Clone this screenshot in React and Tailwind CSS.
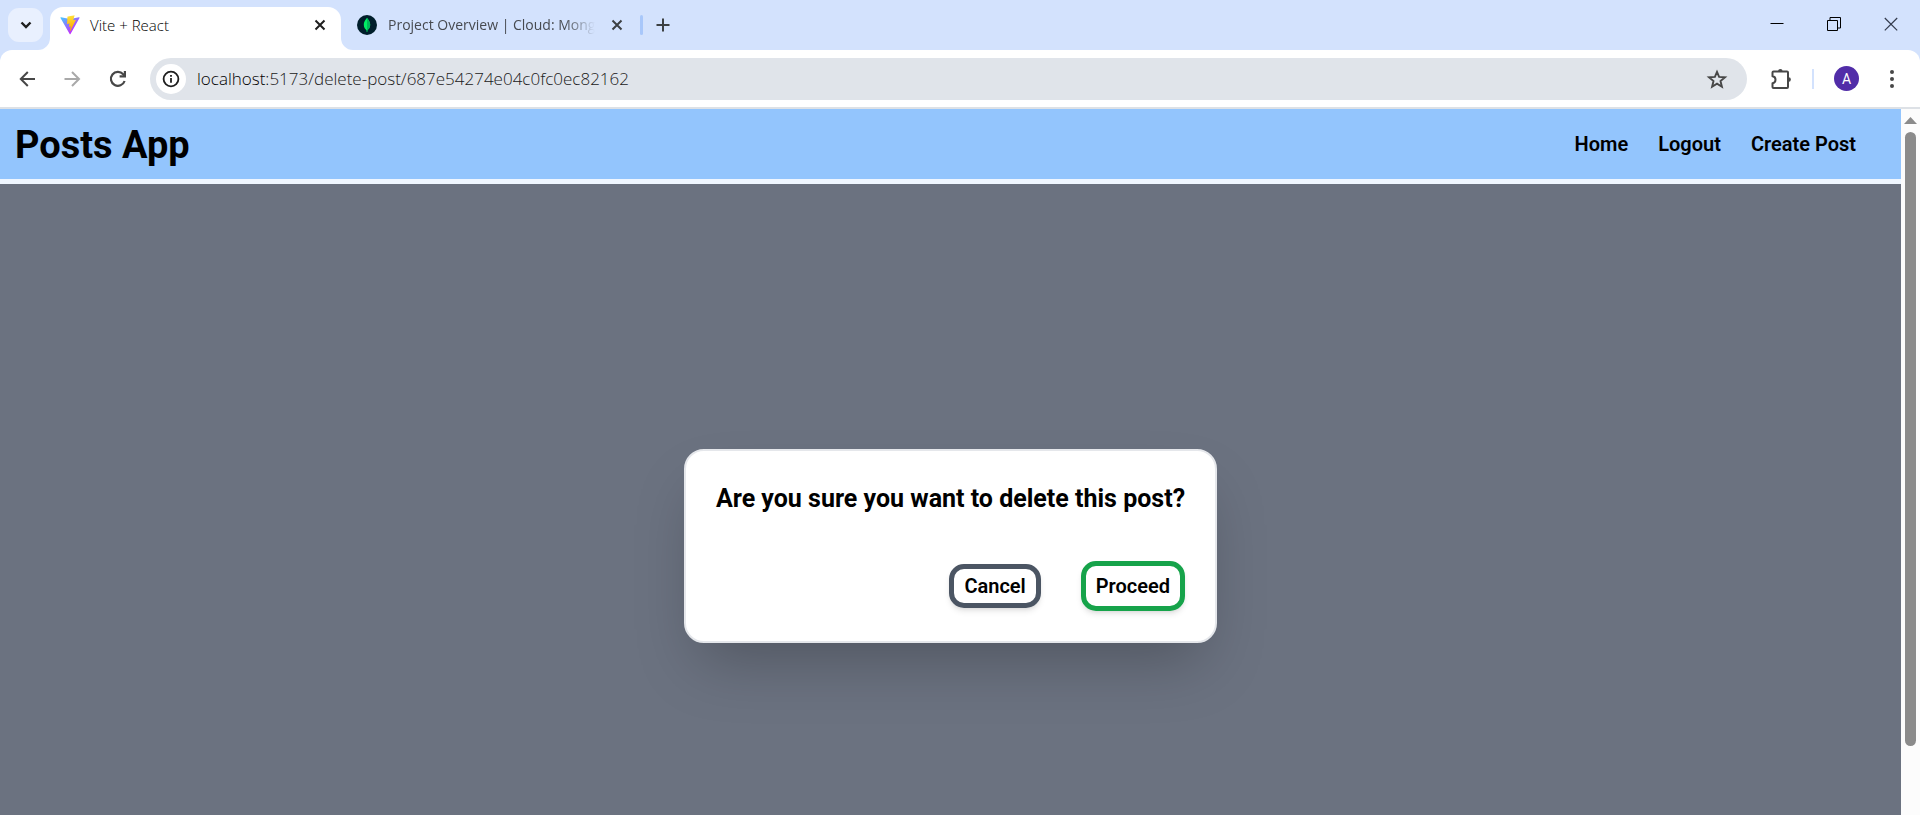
import React from "react";

function ViteLogo() {
  return (
    <svg className="size-5 shrink-0" viewBox="0 0 410 404" fill="none" aria-hidden="true">
      <defs>
        <linearGradient id="viteBody" x1="6" y1="33" x2="235" y2="344" gradientUnits="userSpaceOnUse">
          <stop stopColor="#41D1FF" />
          <stop offset="1" stopColor="#BD34FE" />
        </linearGradient>
        <linearGradient id="viteBolt" x1="194.65" y1="8.82" x2="236.08" y2="292.99" gradientUnits="userSpaceOnUse">
          <stop stopColor="#FFEA83" />
          <stop offset="0.083" stopColor="#FFDD35" />
          <stop offset="1" stopColor="#FFA800" />
        </linearGradient>
      </defs>
      <path fill="url(#viteBody)" d="M399.641 59.5246L215.643 388.545C211.844 395.338 202.084 395.378 198.228 388.618L10.5817 59.5563C6.38087 52.1896 12.6802 43.2665 21.0281 44.7586L205.223 77.6824C206.398 77.8924 207.601 77.8904 208.776 77.6763L389.119 44.8058C397.439 43.2894 403.768 52.1434 399.641 59.5246Z" />
      <path fill="url(#viteBolt)" d="M292.965 1.5744L156.801 28.2552C154.563 28.6937 152.906 30.5903 152.771 32.8664L144.395 174.33C144.198 177.662 147.258 180.248 150.51 179.498L188.42 170.749C191.967 169.931 195.172 173.055 194.443 176.622L183.18 231.775C182.422 235.487 185.907 238.661 189.532 237.56L212.947 230.446C216.577 229.344 220.065 232.527 219.297 236.242L201.398 322.875C200.278 328.294 207.486 331.249 210.492 326.603L212.5 323.5L323.454 102.072C325.312 98.3645 322.108 94.137 318.036 94.9228L279.014 102.454C275.347 103.161 272.227 99.746 273.262 96.1583L298.731 7.86689C299.767 4.27314 296.636 0.855181 292.965 1.5744Z" />
    </svg>
  );
}

function MongoLogo() {
  return (
    <svg className="size-5 shrink-0" viewBox="0 0 20 20" aria-hidden="true">
      <circle cx="10" cy="10" r="10" fill="#001E2B" />
      <path fill="#00ED64" d="M10 2.800c.5 1.200 3.200 3.200 3.200 7 0 3-1.600 4.500-2.800 5.400L10.200 17h-.5l-.2-1.800C8.300 14.300 6.800 12.700 6.800 9.800 6.800 6 9.500 4 10 2.800Z" />
      <path fill="#00B85A" d="M10 2.800c.5 1.200 3.200 3.200 3.200 7 0 3-1.600 4.500-2.800 5.400L10.200 17H10Z" />
    </svg>
  );
}

function Stroke({ size = "size-5", box = 20, width = 2, d, children }) {
  return (
    <svg className={size} viewBox={`0 0 ${box} ${box}`} fill="none" stroke="currentColor" strokeWidth={width} aria-hidden="true">
      {d && <path d={d} />}
      {children}
    </svg>
  );
}

function IconButton({ label, className, children }) {
  return (
    <button type="button" aria-label={label} className={`flex shrink-0 items-center justify-center ${className}`}>
      {children}
    </button>
  );
}

function TabStrip() {
  return (
    <div className="flex h-[50px] shrink-0 items-stretch bg-[#d3e2fd] pl-2">
      <IconButton label="Search tabs" className="mt-2 h-[34px] w-[35px] rounded-[11px] bg-[#e9f0fe] text-[#1f1f1f]">
        <Stroke d="M5.500 7.500 10 12l4.500-4.500" width={2.4} />
      </IconButton>

      <div className="relative ml-[7px] mt-[7px] flex w-[291px] items-center rounded-t-[13px] bg-white pb-4 pl-2.5 pr-[11px] pt-2">
        <svg className="absolute -left-3 bottom-0 size-3" viewBox="0 0 12 12" aria-hidden="true">
          <path fill="#fff" d="M12 0v12H0A12 12 0 0 0 12 0Z" />
        </svg>
        <svg className="absolute -right-3 bottom-0 size-3" viewBox="0 0 12 12" aria-hidden="true">
          <path fill="#fff" d="M0 0v12h12A12 12 0 0 1 0 0Z" />
        </svg>
        <ViteLogo />
        <span className="ml-2.5 flex-1 text-[15px] font-light leading-5 text-black">Vite + React</span>
        <IconButton label="Close tab" className="size-5 text-[#1f1f1f]">
          <Stroke d="M5.500 5.500l9 9M14.500 5.500l-9 9" />
        </IconButton>
      </div>

      <div className="ml-4 mt-[7px] flex w-[270px] items-center pb-4 pt-2">
        <MongoLogo />
        <span className="ml-[11px] w-[208px] whitespace-nowrap text-sm leading-5 text-[#474a50] [mask-image:linear-gradient(to_right,black_85%,transparent)]">
          Project Overview | Cloud: Mong
        </span>
        <IconButton label="Close tab" className="ml-3 size-5 text-[#3c4043]">
          <Stroke d="M5.500 5.500l9 9M14.500 5.500l-9 9" />
        </IconButton>
      </div>

      <div className="ml-[13px] mt-[15px] h-5 w-[3px] rounded-full bg-[#a8c7fa]" />
      <IconButton label="New tab" className="ml-2.5 mt-[15px] size-5 text-[#3c4043]">
        <Stroke d="M10 3.500v13M3.500 10h13" />
      </IconButton>

      <div className="ml-auto flex h-12 pr-px text-black">
        <IconButton label="Minimize" className="w-[57px]">
          <Stroke width={1} d="M3.500 9.500h13" />
        </IconButton>
        <IconButton label="Restore" className="w-[57px]">
          <Stroke width={1} d="M3.500 6.500h10v10h-10zM6 6.500v-3h10.500V14h-3" />
        </IconButton>
        <IconButton label="Close window" className="w-[57px] text-[#333b4d]">
          <Stroke width={1.2} d="M3.800 4l12.400 12.400M16.200 4 3.800 16.400" />
        </IconButton>
      </div>
    </div>
  );
}

function Toolbar() {
  return (
    <div className="shrink-0 bg-[#d3e2fd]">
      <div className="flex h-[59px] items-center rounded-t-xl border-b-2 border-[#dde1e6] bg-white pl-4 pr-[17px] text-[#474747]">
        <IconButton label="Back" className="size-[22px]">
          <Stroke size="size-[22px]" box={22} d="M19 11H4.500M11.800 4 4.800 11l7 7" />
        </IconButton>
        <IconButton label="Forward" className="ml-[23px] size-[22px] text-[#a9a9a9]">
          <Stroke size="size-[22px]" box={22} d="M3.500 11H18M11 4l7 7-7 7" />
        </IconButton>
        <IconButton label="Reload" className="ml-6 size-[22px]">
          <Stroke size="size-[22px]" box={22} width={2.2}>
            <path d="M17.600 13A7 7 0 1 1 16.200 6.200L18 8" />
            <path d="M17.900 3v5.300h-5.300" />
          </Stroke>
        </IconButton>

        <div className="ml-[21px] flex h-[42px] min-w-0 flex-1 items-center rounded-full bg-[#e0e4ea] pl-1.5 pr-[19px]">
          <IconButton label="View site information" className="size-[30px] rounded-full bg-white text-[#1f1f1f]">
            <Stroke size="size-[18px]" box={18} width={1.8}>
              <circle cx="9" cy="9" r="7.400" />
              <path d="M9 8v4.700M9 4.900v1.800" />
            </Stroke>
          </IconButton>
          <a href="#delete-post" className="ml-[11px] min-w-0 flex-1 truncate pt-px text-[17px] font-light leading-6 text-[#202020]">
            <span className="text-black">localhost:</span>5173/delete-post/687e54274e04c0fc0ec82162
          </a>
          <IconButton label="Bookmark this page" className="size-[22px]">
            <Stroke size="size-[22px]" box={22} width={1.9} d="M11 3.900l2.100 5 5.900.4-4.500 3.800 1.400 5.700L11 15.700 6.100 18.800l1.400-5.700L3 9.300l5.900-.4z" />
          </IconButton>
        </div>

        <IconButton label="Extensions" className="ml-[22px] size-6">
          <Stroke size="size-6" box={24}>
            <path strokeLinejoin="round" d="M4.500 4.500H18a1 1 0 0 1 1 1V20a1 1 0 0 1-1 1H4.500a1 1 0 0 1-1-1v-3.800c4-.5 4-6.400 0-6.900V5.500a1 1 0 0 1 1-1z" />
            <path fill="currentColor" stroke="none" d="M9 4.200a2.300 2.300 0 0 1 4.600 0zM19.500 10.200a2.400 2.400 0 0 1 0 4.800z" />
          </Stroke>
        </IconButton>
        <div className="ml-[19px] h-5 w-0.5 bg-[#d3e2fd]" />
        <IconButton label="Profile" className="ml-5 size-[25px] rounded-full bg-[#512da8] font-[Roboto] text-sm text-white">
          A
        </IconButton>
        <IconButton label="Menu" className="ml-[22px] size-[22px]">
          <svg className="size-[22px]" viewBox="0 0 22 22" fill="currentColor" aria-hidden="true">
            <circle cx="11" cy="4" r="2" />
            <circle cx="11" cy="11" r="2" />
            <circle cx="11" cy="18" r="2" />
          </svg>
        </IconButton>
      </div>
    </div>
  );
}

function SiteHeader() {
  return (
    <header className="flex h-[75px] shrink-0 items-center justify-between border-b-[5px] border-[#eff6ff] bg-[#93c5fd] pl-[15px] pr-[45px] text-black">
      <h1 className="pt-0.5 text-[38px] font-bold leading-[45px]">Posts App</h1>
      <nav className="flex gap-[30px] text-xl font-semibold">
        <a href="#home">Home</a>
        <a href="#logout">Logout</a>
        <a href="#create">Create Post</a>
      </nav>
    </header>
  );
}

function ConfirmDialog() {
  return (
    <section role="dialog" aria-labelledby="confirm-title" className="rounded-[20px] border-2 border-gray-200 bg-white p-[30px] text-black shadow-[0_31px_62px_-15px_rgba(0,0,0,0.25)]">
      <h2 id="confirm-title" className="text-[25px] font-bold leading-[35px]">
        Are you sure you want to delete this post?
      </h2>
      <div className="mt-[45px] flex items-center justify-end gap-10 text-xl font-semibold leading-[30px]">
        <button type="button" className="rounded-[15px] border-[5px] border-[#4b5563] px-2.5 py-0.5 shadow-md">
          Cancel
        </button>
        <button type="button" className="rounded-[15px] border-[5px] border-[#16a34a] px-2.5 py-[5px] shadow-md">
          Proceed
        </button>
      </div>
    </section>
  );
}

function Scrollbar() {
  return (
    <div className="flex w-[19px] shrink-0 flex-col items-center bg-[#fcfcfc] pt-2" aria-hidden="true">
      <svg className="h-[7px] w-[13px]" viewBox="0 0 13 7">
        <path fill="#8b8b8b" d="M6.500 0 13 7H0z" />
      </svg>
      <div className="mt-2 h-[88%] w-[11px] rounded-full bg-[#8b8b8b]" />
    </div>
  );
}

export default function App() {
  return (
    <div className="flex h-screen flex-col overflow-hidden font-['Open_Sans','Noto_Sans',sans-serif]">
      <TabStrip />
      <Toolbar />
      <div className="flex min-h-0 flex-1">
        <div className="flex min-w-0 flex-1 flex-col font-[Roboto,sans-serif]">
          <SiteHeader />
          <main className="flex flex-1 items-start justify-center overflow-hidden bg-[#6b7280] pt-[265px]">
            <ConfirmDialog />
          </main>
        </div>
        <Scrollbar />
      </div>
    </div>
  );
}
